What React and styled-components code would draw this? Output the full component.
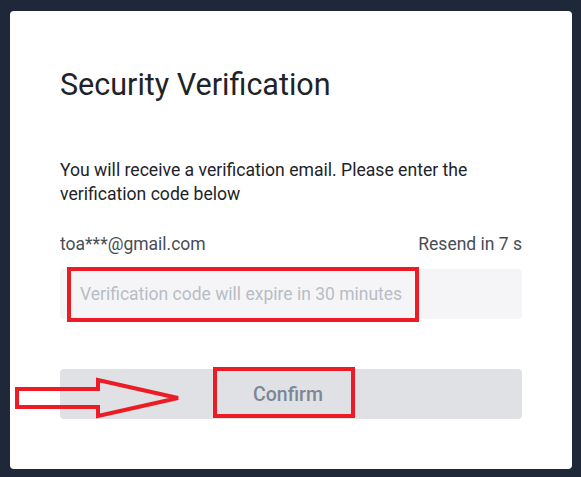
import React from 'react';
import styled, { createGlobalStyle } from 'styled-components';

const GlobalStyle = createGlobalStyle`
    html, body {
        margin: 0;
        padding: 0;
        background: #1e2839;
    }
    body {
        font-family: Roboto, "Liberation Sans", Arial, sans-serif;
    }
`;

const Page = styled.div`
    position: relative;
    width: 581px;
    height: 477px;
    padding: 11px 9px 8px 10px;
    box-sizing: border-box;
`;

const Card = styled.div`
    background: #ffffff;
    border-radius: 4px;
    height: 458px;
    box-sizing: border-box;
    padding: 55px 50px 0 50px;
    display: flex;
    flex-direction: column;
`;

const Title = styled.h1`
    margin: 0;
    font-size: 30.5px;
    line-height: 38px;
    font-weight: 400;
    color: #1e2329;
`;

const Text = styled.p`
    margin: 54px 0 0;
    font-size: 17.6px;
    line-height: 24px;
    color: #1e2329;
`;

const Row = styled.div`
    display: flex;
    justify-content: space-between;
    margin-top: 26px;
    font-size: 17.5px;
    line-height: 24px;
    color: #474d57;
`;

const Input = styled.input`
    margin-top: 13px;
    height: 50px;
    box-sizing: border-box;
    border: none;
    outline: none;
    border-radius: 4px;
    background: #f5f5f7;
    padding: 0 12px 0 20px;
    font-family: inherit;
    font-size: 17.5px;
    color: #1e2329;
    &::placeholder {
        color: #b7bdc6;
    }
`;

const Button = styled.button`
    margin-top: 50px;
    height: 50px;
    border: none;
    border-radius: 4px;
    background: #e0e1e5;
    color: #7e8696;
    font-family: inherit;
    font-size: 19.5px;
    font-weight: 500;
    padding: 0 6px 0 0;
`;

const Mark = styled.div`
    position: absolute;
    box-sizing: border-box;
    border: 4px solid #ed1c24;
    left: ${p => p.x}px;
    top: ${p => p.y}px;
    width: ${p => p.w}px;
    height: ${p => p.h}px;
`;

const Arrow = styled.svg`
    position: absolute;
    left: 0;
    top: 370px;
`;

export default function App() {
    return (
        <>
            <GlobalStyle />
            <Page>
                <Card>
                    <Title>Security Verification</Title>
                    <Text>You will receive a verification email. Please enter the verification code below</Text>
                    <Row>
                        <span>toa***@gmail.com</span>
                        <span>Resend in 7 s</span>
                    </Row>
                    <Input placeholder="Verification code will expire in 30 minutes" />
                    <Button>Confirm</Button>
                </Card>
                <Mark x={67} y={267} w={352} h={55} />
                <Mark x={213} y={367} w={142} h={51} />
                <Arrow width="190" height="56" viewBox="0 0 190 56">
                    <polygon
                        points="17,19 98,19 98,10 178,28 98,46 98,37 17,37"
                        fill="none"
                        stroke="#ed1c24"
                        strokeWidth="4"
                    />
                </Arrow>
            </Page>
        </>
    );
}
